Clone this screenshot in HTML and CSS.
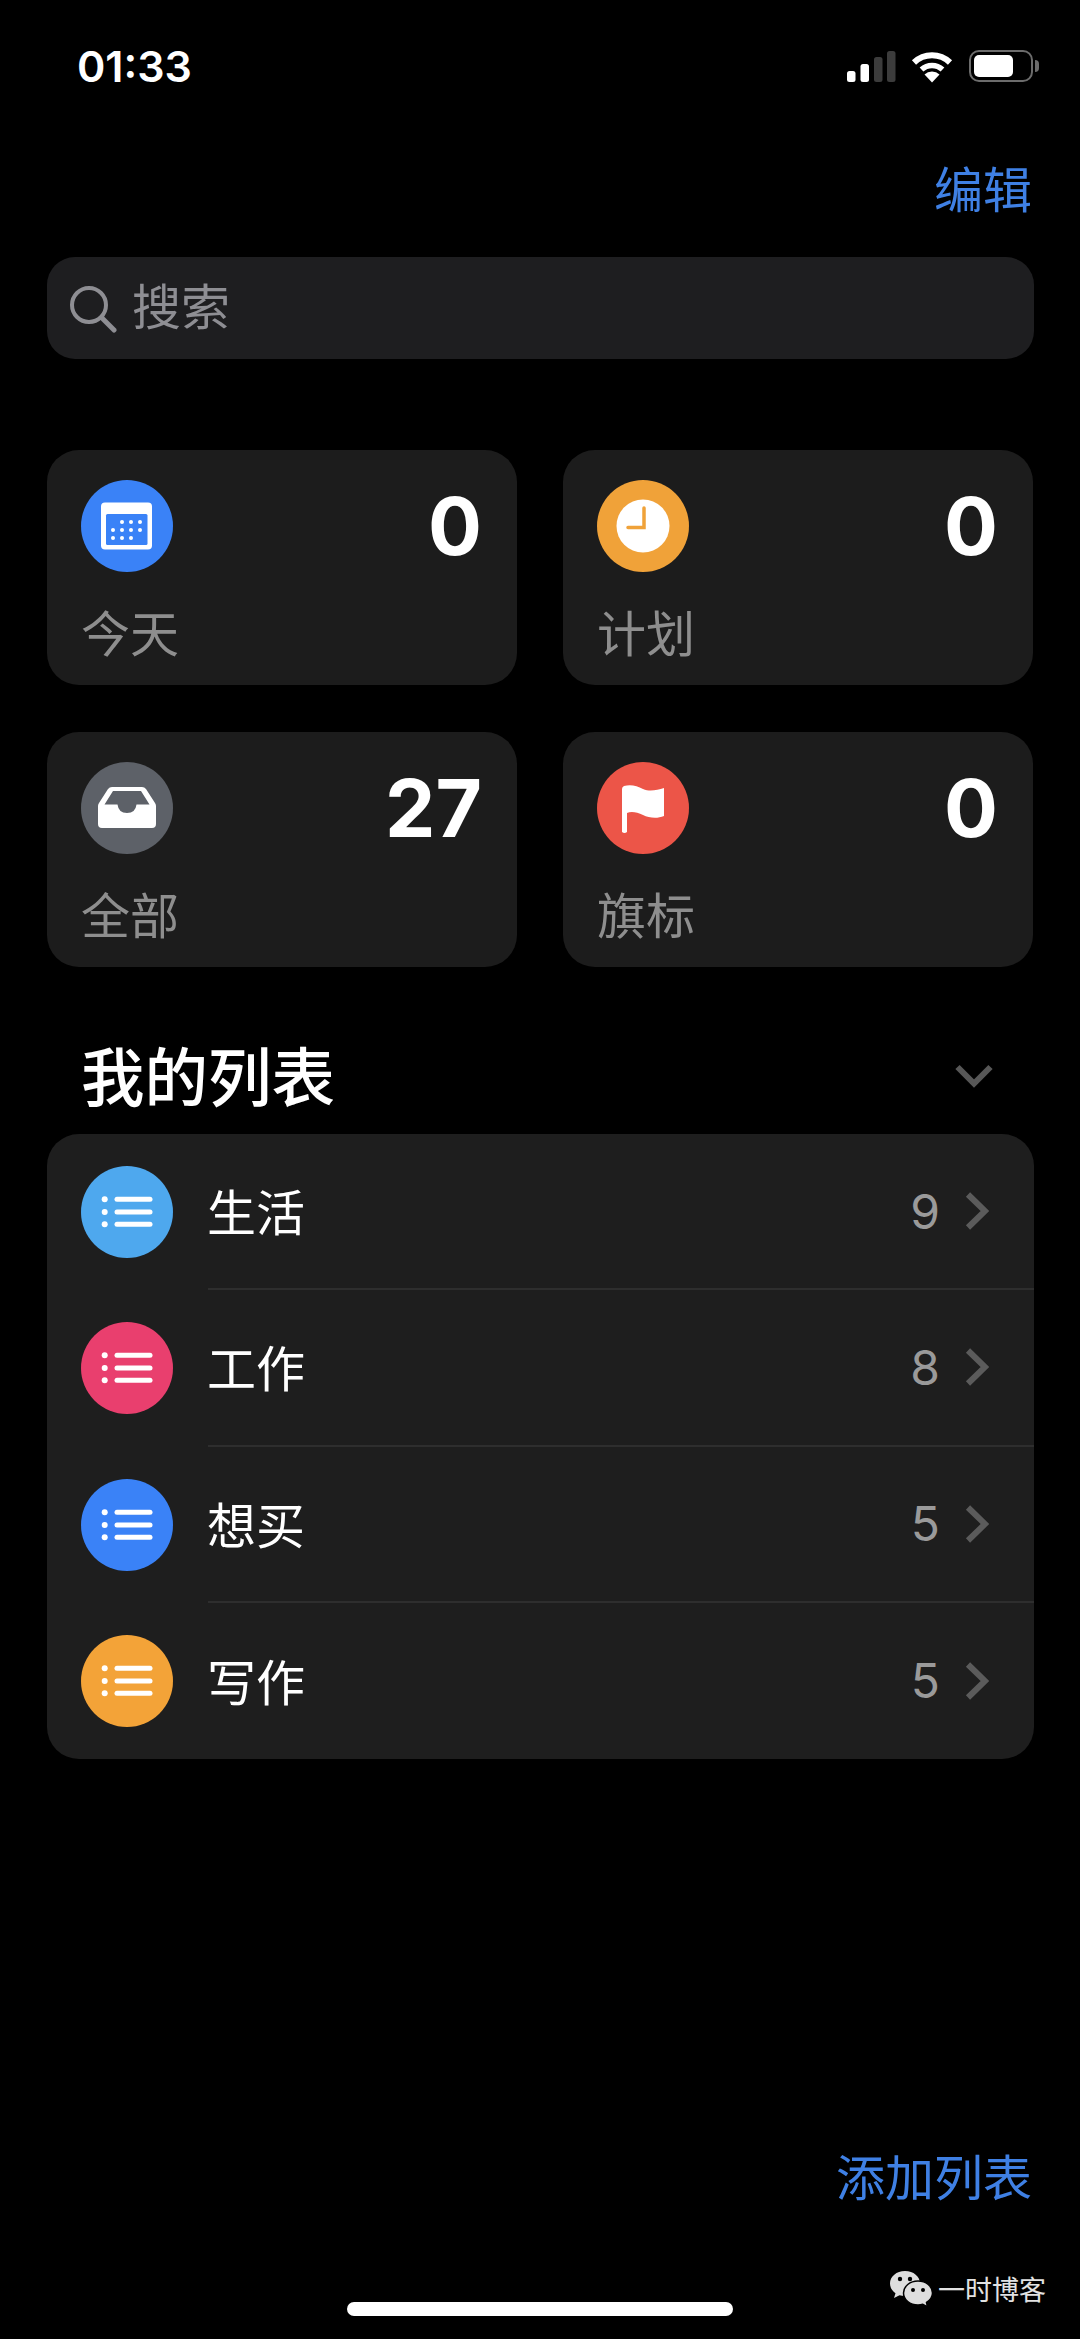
FILE: index.html
```html
<!DOCTYPE html>
<html lang="zh-CN">
<head>
    <meta charset="UTF-8">
    <meta name="viewport" content="width=device-width, initial-scale=1.0">
    <title>提醒事项</title>
    <link rel="stylesheet" href="styles.css">
</head>
<body>
<div class="page">

    <div class="status-bar">
        <div class="time">01:33</div>
        <div class="status-icons">
            <svg class="signal" width="49" height="32" viewBox="0 0 49 32">
                <rect x="0" y="20" width="8.5" height="11" rx="2.5" fill="#fff"/>
                <rect x="13.5" y="13" width="8.5" height="18" rx="2.5" fill="#fff"/>
                <rect x="27" y="6" width="8.5" height="25" rx="2.5" fill="#3c3c3c"/>
                <rect x="40" y="0" width="8.5" height="31" rx="2.5" fill="#3c3c3c"/>
            </svg>
            <svg class="wifi" width="42" height="32" viewBox="0 0 42 32">
                <path d="M3 11.5A26 26 0 0 1 39 11.5" fill="none" stroke="#fff" stroke-width="6"/>
                <path d="M10.5 18.5A15.5 15.5 0 0 1 31.5 18.5" fill="none" stroke="#fff" stroke-width="5.5"/>
                <path d="M21 31.5L13.5 23.5A11 11 0 0 1 28.5 23.5Z" fill="#fff"/>
            </svg>
            <div class="battery">
                <div class="battery-level"></div>
            </div>
        </div>
    </div>

    <div class="nav">
        <span class="link">编辑</span>
    </div>

    <div class="search">
        <svg width="48" height="48" viewBox="0 0 48 48">
            <circle cx="20" cy="20" r="17" fill="none" stroke="#8e8e93" stroke-width="4"/>
            <path d="M33 33L45 45" stroke="#8e8e93" stroke-width="5" stroke-linecap="round"/>
        </svg>
        <span>搜索</span>
    </div>

    <div class="cards">
        <div class="card">
            <div class="card-top">
                <svg class="icon" width="92" height="92" viewBox="0 0 92 92">
                    <circle cx="46" cy="46" r="46" fill="#3a82f7"/>
                    <rect x="20" y="22.5" width="51" height="47" rx="4" fill="#fff"/>
                    <rect x="25" y="34" width="41.5" height="31" rx="1.5" fill="#3a82f7"/>
                    <g fill="#fff">
                        <circle cx="41" cy="42" r="2"/><circle cx="50" cy="42" r="2"/><circle cx="59" cy="42" r="2"/>
                        <circle cx="32" cy="50" r="2"/><circle cx="41" cy="50" r="2"/><circle cx="50" cy="50" r="2"/><circle cx="59" cy="50" r="2"/>
                        <circle cx="32" cy="58" r="2"/><circle cx="41" cy="58" r="2"/><circle cx="50" cy="58" r="2"/>
                    </g>
                </svg>
                <div class="count">0</div>
            </div>
            <div class="card-label">今天</div>
        </div>
        <div class="card">
            <div class="card-top">
                <svg class="icon" width="92" height="92" viewBox="0 0 92 92">
                    <circle cx="46" cy="46" r="46" fill="#f0a239"/>
                    <circle cx="46" cy="46" r="26.5" fill="#fff"/>
                    <path d="M47 28V47.5H31" fill="none" stroke="#f0a239" stroke-width="3.5" stroke-linecap="round"/>
                </svg>
                <div class="count">0</div>
            </div>
            <div class="card-label">计划</div>
        </div>
        <div class="card">
            <div class="card-top">
                <svg class="icon" width="92" height="92" viewBox="0 0 92 92">
                    <circle cx="46" cy="46" r="46" fill="#5d6168"/>
                    <path d="M31 25H61Q63.5 25 65 27L74 41Q75 42.5 75 44V62Q75 66 71 66H21Q17 66 17 62V44Q17 42.5 18 41L27 27Q28.5 25 31 25Z" fill="#fff"/>
                    <path d="M32 29H60L68.5 42.5H55.5Q54.5 51 46 51Q37.5 51 36.5 42.5H23.5Z" fill="#5d6168"/>
                </svg>
                <div class="count">27</div>
            </div>
            <div class="card-label">全部</div>
        </div>
        <div class="card">
            <div class="card-top">
                <svg class="icon" width="92" height="92" viewBox="0 0 92 92">
                    <circle cx="46" cy="46" r="46" fill="#ec5548"/>
                    <path d="M27 24C34 22 40 24 46 27C53 30 60 28 67 26V54C60 57 52 56 46 53C40 50 34 49 30 51V70Q27.5 72 25 70V27Q25 25 27 24Z" fill="#fff"/>
                </svg>
                <div class="count">0</div>
            </div>
            <div class="card-label">旗标</div>
        </div>
    </div>

    <div class="section-head">
        <h2>我的列表</h2>
        <svg width="38" height="24" viewBox="0 0 38 24">
            <path d="M2.5 3L19 19.5L35.5 3" fill="none" stroke="#575757" stroke-width="6"/>
        </svg>
    </div>

    <div class="list">
        <div class="row">
            <svg class="icon" width="92" height="92" viewBox="0 0 92 92">
                <circle cx="46" cy="46" r="46" fill="#4ea8ee"/>
                <use href="#lines"/>
            </svg>
            <div class="row-body">
                <span class="row-name">生活</span>
                <span class="row-count">9</span>
                <svg class="chevron" width="24" height="38" viewBox="0 0 24 38"><path d="M3 2.5L20 19L3 35.5" fill="none" stroke="#5b5b5b" stroke-width="6"/></svg>
            </div>
        </div>
        <div class="row">
            <svg class="icon" width="92" height="92" viewBox="0 0 92 92">
                <circle cx="46" cy="46" r="46" fill="#e93f6e"/>
                <use href="#lines"/>
            </svg>
            <div class="row-body">
                <span class="row-name">工作</span>
                <span class="row-count">8</span>
                <svg class="chevron" width="24" height="38" viewBox="0 0 24 38"><path d="M3 2.5L20 19L3 35.5" fill="none" stroke="#5b5b5b" stroke-width="6"/></svg>
            </div>
        </div>
        <div class="row">
            <svg class="icon" width="92" height="92" viewBox="0 0 92 92">
                <circle cx="46" cy="46" r="46" fill="#3a82f7"/>
                <use href="#lines"/>
            </svg>
            <div class="row-body">
                <span class="row-name">想买</span>
                <span class="row-count">5</span>
                <svg class="chevron" width="24" height="38" viewBox="0 0 24 38"><path d="M3 2.5L20 19L3 35.5" fill="none" stroke="#5b5b5b" stroke-width="6"/></svg>
            </div>
        </div>
        <div class="row">
            <svg class="icon" width="92" height="92" viewBox="0 0 92 92">
                <circle cx="46" cy="46" r="46" fill="#f3a338"/>
                <use href="#lines"/>
            </svg>
            <div class="row-body">
                <span class="row-name">写作</span>
                <span class="row-count">5</span>
                <svg class="chevron" width="24" height="38" viewBox="0 0 24 38"><path d="M3 2.5L20 19L3 35.5" fill="none" stroke="#5b5b5b" stroke-width="6"/></svg>
            </div>
        </div>
    </div>

    <div class="footer">
        <span class="link">添加列表</span>
    </div>

    <div class="watermark">
        <svg width="44" height="38" viewBox="0 0 44 38">
            <path d="M16 1C7.5 1 1 6.5 1 13.5C1 17.5 3.2 21 6.5 23.3L5 28L10.5 25.3C12.2 25.8 14 26 16 26C24.5 26 31 20.5 31 13.5C31 6.5 24.5 1 16 1Z" fill="#dedede"/>
            <path d="M29 11C21 11 14.5 16.3 14.5 23C14.5 29.7 21 35 29 35C30.7 35 32.3 34.8 33.8 34.3L38.5 37L37.5 32.5C41 30.2 43.5 26.8 43.5 23C43.5 16.3 37 11 29 11Z" fill="#dedede" stroke="#000" stroke-width="1.5"/>
            <circle cx="11" cy="9" r="2.2" fill="#000"/><circle cx="21" cy="9" r="2.2" fill="#000"/>
            <circle cx="24" cy="20" r="2" fill="#000"/><circle cx="34" cy="20" r="2" fill="#000"/>
        </svg>
        <span>一时博客</span>
    </div>

    <div class="home-bar"></div>
</div>

<svg width="0" height="0" class="defs">
    <defs>
        <g id="lines" fill="#fff">
            <circle cx="23.7" cy="33.3" r="3"/>
            <circle cx="23.7" cy="46" r="3"/>
            <circle cx="23.7" cy="58.3" r="3"/>
            <rect x="33.5" y="30.8" width="38" height="5" rx="2.5"/>
            <rect x="33.5" y="43.5" width="38" height="5" rx="2.5"/>
            <rect x="33.5" y="55.8" width="38" height="5" rx="2.5"/>
        </g>
    </defs>
</svg>
</body>
</html>
```
FILE: styles.css
```css
body {
    margin: 0;
    background: #000;
    font-family: "Noto Sans CJK SC", sans-serif;
    color: #fff;
}

.page {
    position: relative;
    box-sizing: border-box;
    display: flex;
    flex-direction: column;
    width: 1080px;
    height: 2339px;
    padding: 0 46px 134px 47px;
    overflow: hidden;
}

.defs {
    position: absolute;
}

.status-bar {
    display: flex;
    justify-content: space-between;
    align-items: flex-start;
    height: 132px;
    padding: 50px 0 0 30px;
    box-sizing: border-box;
}

.time {
    font-family: Inter, sans-serif;
    font-size: 43px;
    font-weight: 600;
    line-height: 32px;
}

.status-icons {
    display: flex;
    align-items: flex-start;
    margin-right: 1px;
}

.signal {
    margin: 1px 15px 0 0;
}

.wifi {
    margin: 1px 16px 0 0;
}

.battery {
    position: relative;
    box-sizing: border-box;
    width: 64px;
    height: 32px;
    padding: 3px;
    border: 2px solid #6c6c6c;
    border-radius: 10px;
}

.battery::after {
    content: "";
    position: absolute;
    top: 8px;
    right: -8px;
    width: 4px;
    height: 12px;
    background: #6c6c6c;
    border-radius: 0 4px 4px 0;
}

.battery-level {
    width: 39px;
    height: 22px;
    background: #fff;
    border-radius: 5px;
}

.nav {
    display: flex;
    justify-content: flex-end;
    align-items: center;
    height: 110px;
    margin-bottom: 15px;
    padding-right: 2px;
}

.link {
    font-size: 49px;
    line-height: 60px;
    color: #3f80e4;
}

.search {
    display: flex;
    align-items: center;
    gap: 15px;
    height: 102px;
    margin-bottom: 91px;
    padding-left: 22px;
    background: #1e1e20;
    border-radius: 28px;
    font-size: 49px;
    color: #8e8e93;
}

.search svg {
    margin-top: 2px;
}

.search span {
    margin-top: -10px;
}

.cards {
    display: grid;
    grid-template-columns: 470px 470px;
    grid-auto-rows: 235px;
    column-gap: 46px;
    row-gap: 47px;
}

.card {
    box-sizing: border-box;
    padding: 30px 35px 0 34px;
    background: #1c1c1c;
    border-radius: 32px;
}

.card-top {
    display: flex;
    justify-content: space-between;
    align-items: center;
    height: 92px;
}

.icon {
    flex: none;
}

.count {
    font-family: Inter, sans-serif;
    font-size: 80px;
    font-weight: 700;
    line-height: 92px;
}

.card-label {
    margin-top: 29px;
    font-size: 49px;
    line-height: 60px;
    color: #8e8e8e;
}

.section-head {
    display: flex;
    justify-content: space-between;
    align-items: center;
    height: 100px;
    margin: 59px 0 8px;
    padding: 0 41px 0 34px;
}

.section-head h2 {
    margin: 0 0 6px;
    font-size: 63.5px;
    font-weight: 500;
    line-height: 80px;
}

.list {
    background: #1e1e1e;
    border-radius: 32px;
    overflow: hidden;
}

.row {
    display: flex;
    align-items: center;
    height: 156.25px;
    padding-left: 34px;
}

.row-body {
    display: flex;
    flex: 1;
    align-items: center;
    box-sizing: border-box;
    height: 100%;
    margin-left: 35px;
    padding: 0 45px 0 0;
    border-bottom: 2px solid #2e2e2e;
}

.row:last-child .row-body {
    border-bottom: none;
}

.row-name {
    flex: 1;
    margin: 0 0 2px -1px;
    font-size: 49px;
    line-height: 60px;
}

.row-count {
    font-family: Inter, sans-serif;
    font-size: 48px;
    color: #9a9a9a;
}

.chevron {
    margin-left: 25px;
}

.footer {
    display: flex;
    justify-content: flex-end;
    margin-top: auto;
    padding-right: 2px;
}

.watermark {
    position: absolute;
    left: 889px;
    top: 2270px;
    display: flex;
    align-items: center;
    gap: 5px;
    font-size: 27px;
    line-height: 38px;
    color: #e2e2e2;
}

.home-bar {
    position: absolute;
    left: 347px;
    top: 2302px;
    width: 386px;
    height: 14px;
    background: #fff;
    border-radius: 7px;
}
```
